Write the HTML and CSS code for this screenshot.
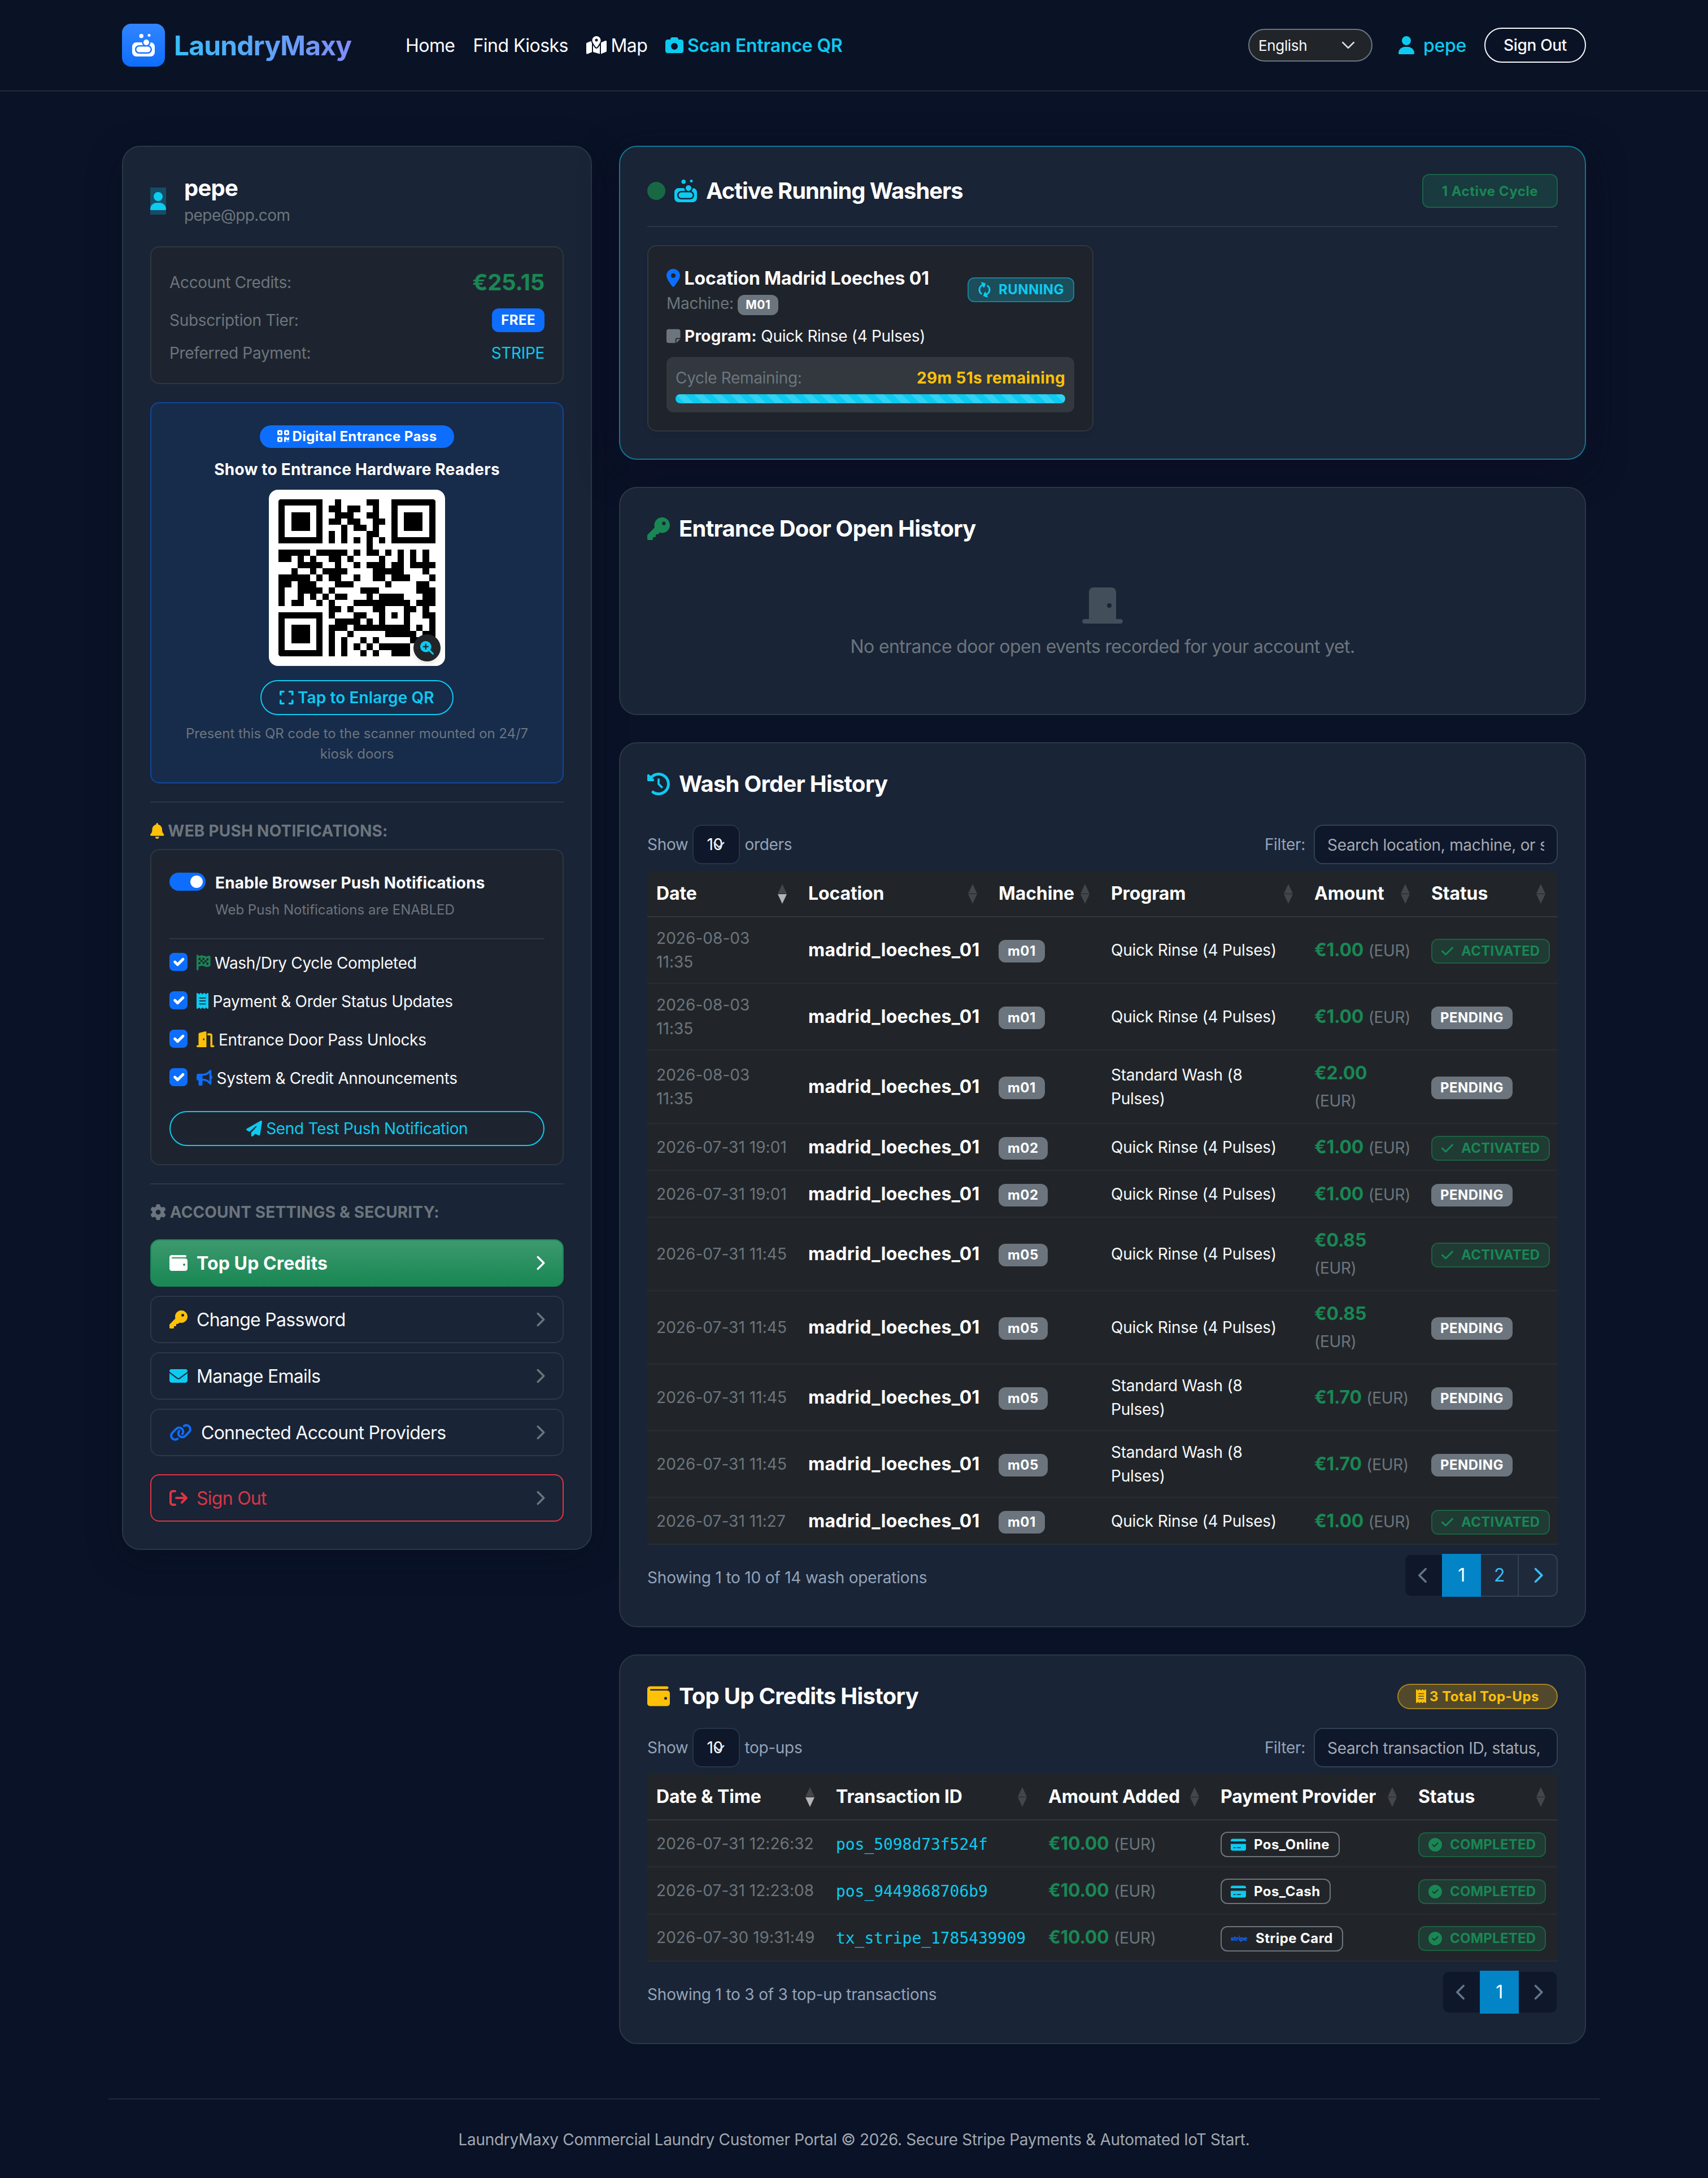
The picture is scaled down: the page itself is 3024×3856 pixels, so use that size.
FILE: index.html
```html
<!DOCTYPE html>
<html lang="en">
<head>
    <meta charset="UTF-8">
    <meta name="viewport" content="width=device-width, initial-scale=1.0">
    <title>LaundryMaxy - My Account</title>
    <link rel="stylesheet" href="styles.css">
</head>
<body>
    <!-- Icon shapes -->
    <svg class="sprite" aria-hidden="true">
        <defs>
            <path id="i-user" d="M224 256A128 128 0 1 0 224 0a128 128 0 1 0 0 256zm-45.7 48C79.8 304 0 383.8 0 482.3C0 498.7 13.3 512 29.7 512H418.3c16.4 0 29.7-13.3 29.7-29.7C448 383.8 368.2 304 269.7 304H178.3z"/>
            <path id="i-soap" d="M208 96A48 48 0 1 0 208 0a48 48 0 1 0 0 96zM320 256c35.3 0 64-28.7 64-64s-28.7-64-64-64s-64 28.7-64 64s28.7 64 64 64zM416 32a32 32 0 1 0 -64 0 32 32 0 1 0 64 0zm0 160c0 27.6-11.7 52.5-30.4 70.1C422.1 275.7 448 310.8 448 352c0 53-43 96-96 96l-192 0c-53 0-96-43-96-96s43-96 96-96l88.4 0c-15.2-17-24.4-39.4-24.4-64L96 192c-53 0-96 43-96 96L0 416c0 53 43 96 96 96l320 0c53 0 96-43 96-96l0-128c0-53-43-96-96-96zM160 288c-35.3 0-64 28.7-64 64s28.7 64 64 64l192 0c35.3 0 64-28.7 64-64s-28.7-64-64-64l-192 0z"/>
            <path id="i-map" d="M408 120c0 54.6-73.1 151.9-105.2 192c-7.7 9.6-22 9.6-29.6 0C241.1 271.9 168 174.6 168 120C168 53.7 221.7 0 288 0s120 53.7 120 120zm8 80.4c3.5-6.9 6.7-13.8 9.6-20.6c.5-1.2 1-2.5 1.5-3.7l116-46.4C558.9 123.4 576 135 576 152V422.8c0 9.8-6 18.6-15.1 22.3L416 503V200.4zM137.6 138.3c2.4 14.1 7.2 28.3 12.8 41.5c2.9 6.8 6.1 13.7 9.6 20.6V451.8L32.9 502.7C17.1 509 0 497.4 0 480.4V209.6c0-9.8 6-18.6 15.1-22.3l122.6-49zM327.8 332c13.9-17.4 35.7-45.7 56.2-77V504.3L192 449.4V255c20.5 31.3 42.3 59.6 56.2 77c20.5 25.6 59.1 25.6 79.6 0zM288 152a40 40 0 1 0 0-80 40 40 0 1 0 0 80z"/>
            <path id="i-camera" d="M149.1 64.8L138.7 96H64C28.7 96 0 124.7 0 160V416c0 35.3 28.7 64 64 64H448c35.3 0 64-28.7 64-64V160c0-35.3-28.7-64-64-64H373.3L362.9 64.8C356.4 45.2 338.1 32 317.4 32H194.6c-20.7 0-39 13.2-45.5 32.8zM256 192a96 96 0 1 1 0 192 96 96 0 1 1 0-192z"/>
            <path id="i-qrcode" d="M0 80C0 53.5 21.5 32 48 32h96c26.5 0 48 21.5 48 48v96c0 26.5-21.5 48-48 48H48c-26.5 0-48-21.5-48-48V80zM64 96v64h64V96H64zM0 336c0-26.5 21.5-48 48-48h96c26.5 0 48 21.5 48 48v96c0 26.5-21.5 48-48 48H48c-26.5 0-48-21.5-48-48V336zm64 16v64h64V352H64zM304 32h96c26.5 0 48 21.5 48 48v96c0 26.5-21.5 48-48 48H304c-26.5 0-48-21.5-48-48V80c0-26.5 21.5-48 48-48zm80 64H320v64h64V96zM256 304c0-8.8 7.2-16 16-16h64c8.8 0 16 7.2 16 16s7.2 16 16 16h32c8.8 0 16-7.2 16-16s7.2-16 16-16s16 7.2 16 16v96c0 8.8-7.2 16-16 16H368c-8.8 0-16-7.2-16-16s-7.2-16-16-16s-16 7.2-16 16v64c0 8.8-7.2 16-16 16H272c-8.8 0-16-7.2-16-16V304zM368 480a16 16 0 1 1 0-32 16 16 0 1 1 0 32zm64 0a16 16 0 1 1 0-32 16 16 0 1 1 0 32z"/>
            <path id="i-expand" d="M32 32C14.3 32 0 46.3 0 64v96c0 17.7 14.3 32 32 32s32-14.3 32-32V96h64c17.7 0 32-14.3 32-32s-14.3-32-32-32H32zM64 352c0-17.7-14.3-32-32-32s-32 14.3-32 32v96c0 17.7 14.3 32 32 32h96c17.7 0 32-14.3 32-32s-14.3-32-32-32H64V352zM320 32c-17.7 0-32 14.3-32 32s14.3 32 32 32h64v64c0 17.7 14.3 32 32 32s32-14.3 32-32V64c0-17.7-14.3-32-32-32H320zM448 352c0-17.7-14.3-32-32-32s-32 14.3-32 32v64H320c-17.7 0-32 14.3-32 32s14.3 32 32 32h96c17.7 0 32-14.3 32-32V352z"/>
            <path id="i-zoom" d="M416 208c0 45.9-14.9 88.3-40 122.7L502.6 457.4c12.5 12.5 12.5 32.8 0 45.3s-32.8 12.5-45.3 0L330.7 376c-34.4 25.2-76.8 40-122.7 40C93.1 416 0 322.9 0 208S93.1 0 208 0S416 93.1 416 208zM184 296c0 13.3 10.7 24 24 24s24-10.7 24-24V232h64c13.3 0 24-10.7 24-24s-10.7-24-24-24H232V120c0-13.3-10.7-24-24-24s-24 10.7-24 24v64H120c-13.3 0-24 10.7-24 24s10.7 24 24 24h64v64z"/>
            <path id="i-bell" d="M224 0c-17.7 0-32 14.3-32 32V51.2C119 66 64 130.6 64 208v18.8c0 47-17.3 92.4-48.5 127.6l-7.4 8.3c-8.4 9.4-10.4 22.9-5.3 34.4S19.4 416 32 416H416c12.6 0 24-7.4 29.2-18.9s3.1-25-5.3-34.4l-7.4-8.3C401.3 319.2 384 273.9 384 226.8V208c0-77.4-55-142-128-156.8V32c0-17.7-14.3-32-32-32zm45.3 493.3c12-12 18.7-28.3 18.7-45.3H224 160c0 17 6.7 33.3 18.7 45.3s28.3 18.7 45.3 18.7s33.3-6.7 45.3-18.7z"/>
            <path id="i-flag" d="M32 0C49.7 0 64 14.3 64 32V48l69-17.2c38.1-9.5 78.3-5.1 113.5 12.5c46.3 23.2 100.8 23.2 147.1 0l9.6-4.8C423.8 28.1 448 43.1 448 66.1V345.8c0 13.3-8.3 25.3-20.8 30l-34.7 13c-46.2 17.3-97.6 14.6-141.7-7.4c-37.9-19-81.3-23.7-122.5-13.4L64 384v96c0 17.7-14.3 32-32 32s-32-14.3-32-32V400 334 64 32C0 14.3 14.3 0 32 0zM64 187.1l64-13.9v65.5L64 252.6V318l48.8-12.2c5.1-1.3 10.1-2.4 15.2-3.3V238.7l38.9-8.4c8.3-1.8 16.7-2.5 25.1-2.1l0-64c13.6 .4 27.2 2.6 40.4 6.4l23.6 6.9v66.7l-41.7-12.3c-7.3-2.1-14.8-3.4-22.3-3.8v71.4c21.8 1.9 43.3 6.7 64 14.4V244.2l22.7 6.7c13.5 4 27.3 6.4 41.3 7.4V194c-7.8-.8-15.6-2.3-23.2-4.5l-40.8-12v-62c-13-3.8-25.8-8.8-38.2-15c-8.2-4.1-16.9-7-25.8-8.8v72.4c-13-.4-26 .8-38.7 3.6L128 173.2V98L64 114v73.1zM320 335.7c16.8 1.5 33.9-.7 50-6.8l14-5.2V251.9l-7.9 1.8c-18.4 4.3-37.3 5.7-56.1 4.5v77.4zm64-149.4V115.4c-20.9 6.1-42.4 9.1-64 9.1V194c13.9 1.4 28 .5 41.7-2.6l22.3-5.2z"/>
            <path id="i-receipt" d="M14 2.2C22.5-1.7 32.5-.3 39.6 5.8L80 40.4 120.4 5.8c9-7.7 22.3-7.7 31.2 0L192 40.4 232.4 5.8c9-7.7 22.3-7.7 31.2 0L304 40.4 344.4 5.8c7.1-6.1 17.1-7.5 25.6-3.6s14 12.4 14 21.8V488c0 9.4-5.5 17.9-14 21.8s-18.5 2.5-25.6-3.6L304 471.6l-40.4 34.6c-9 7.7-22.3 7.7-31.2 0L192 471.6l-40.4 34.6c-9 7.7-22.3 7.7-31.2 0L80 471.6 39.6 506.2c-7.1 6.1-17.1 7.5-25.6 3.6S0 497.4 0 488V24C0 14.6 5.5 6.1 14 2.2zM96 144c-8.8 0-16 7.2-16 16s7.2 16 16 16H288c8.8 0 16-7.2 16-16s-7.2-16-16-16H96zM80 352c0 8.8 7.2 16 16 16H288c8.8 0 16-7.2 16-16s-7.2-16-16-16H96c-8.8 0-16 7.2-16 16zM96 240c-8.8 0-16 7.2-16 16s7.2 16 16 16H288c8.8 0 16-7.2 16-16s-7.2-16-16-16H96z"/>
            <path id="i-door-open" d="M320 32c0-9.9-4.5-19.2-12.3-25.2S289.8-1.4 280.2 1l-179.9 45C79 51.3 64 70.5 64 92.5V448H32c-17.7 0-32 14.3-32 32s14.3 32 32 32H96 288h32V480 32zM256 256c0 17.7-10.7 32-24 32s-24-14.3-24-32s10.7-32 24-32s24 14.3 24 32zm96-128h96V480c0 17.7 14.3 32 32 32h64c17.7 0 32-14.3 32-32s-14.3-32-32-32H512V128c0-35.3-28.7-64-64-64H352v64z"/>
            <path id="i-door-closed" d="M96 64c0-35.3 28.7-64 64-64H416c35.3 0 64 28.7 64 64V448h64c17.7 0 32 14.3 32 32s-14.3 32-32 32H432 144 32c-17.7 0-32-14.3-32-32s14.3-32 32-32H96V64zM384 288a32 32 0 1 0 0-64 32 32 0 1 0 0 64z"/>
            <path id="i-bullhorn" d="M480 32c0-12.9-7.8-24.6-19.8-29.6s-25.7-2.2-34.9 6.9L381.7 53c-48 48-113.1 75-181 75H192 160 64c-35.3 0-64 28.7-64 64v96c0 35.3 28.7 64 64 64l0 128c0 17.7 14.3 32 32 32h64c17.7 0 32-14.3 32-32V352l8.7 0c67.9 0 133 27 181 75l43.6 43.6c9.2 9.2 22.9 11.9 34.9 6.9s19.8-16.6 19.8-29.6V300.4c18.6-8.8 32-32.5 32-60.4s-13.4-51.6-32-60.4V32zm-64 76.7V240 371.3C357.2 317.8 280.5 288 200.7 288H192V192h8.7c79.8 0 156.5-29.8 215.3-83.3z"/>
            <path id="i-plane" d="M498.1 5.6c10.1 7 15.4 19.1 13.5 31.2l-64 416c-1.5 9.7-7.4 18.2-16 23s-18.9 5.4-28 1.6L284 427.7l-68.5 74.1c-8.9 9.7-22.9 12.9-35.2 8.1S160 493.2 160 480V396.4c0-4 1.5-7.8 4.2-10.7L331.8 202.8c5.8-6.3 5.6-16-.4-22s-15.7-6.4-22-.7L106 360.8 17.7 316.6C7.1 311.3 .3 300.7 0 288.9s5.9-22.8 16.1-28.7l448-256c10.7-6.1 23.9-5.5 34 1.4z"/>
            <path id="i-gear" d="M495.9 166.6c3.2 8.7 .5 18.4-6.4 24.6l-43.3 39.4c1.1 8.3 1.7 16.8 1.7 25.4s-.6 17.1-1.7 25.4l43.3 39.4c6.9 6.2 9.6 15.9 6.4 24.6c-4.4 11.9-9.7 23.3-15.8 34.3l-4.7 8.1c-6.6 11-14 21.4-22.1 31.2c-5.9 7.2-15.7 9.6-24.5 6.8l-55.7-17.7c-13.4 10.3-28.2 18.9-44 25.4l-12.5 57.1c-2 9.1-9 16.3-18.2 17.8c-13.8 2.3-28 3.5-42.5 3.5s-28.7-1.2-42.5-3.5c-9.2-1.5-16.2-8.7-18.2-17.8l-12.5-57.1c-15.8-6.5-30.6-15.1-44-25.4L83.1 425.9c-8.8 2.8-18.6 .3-24.5-6.8c-8.1-9.8-15.5-20.2-22.1-31.2l-4.7-8.1c-6.1-11-11.4-22.4-15.8-34.3c-3.2-8.7-.5-18.4 6.4-24.6l43.3-39.4C64.6 273.1 64 264.6 64 256s.6-17.1 1.7-25.4L22.4 191.2c-6.9-6.2-9.6-15.9-6.4-24.6c4.4-11.9 9.7-23.3 15.8-34.3l4.7-8.1c6.6-11 14-21.4 22.1-31.2c5.9-7.2 15.7-9.6 24.5-6.8l55.7 17.7c13.4-10.3 28.2-18.9 44-25.4l12.5-57.1c2-9.1 9-16.3 18.2-17.8C227.3 1.2 241.5 0 256 0s28.7 1.2 42.5 3.5c9.2 1.5 16.2 8.7 18.2 17.8l12.5 57.1c15.8 6.5 30.6 15.1 44 25.4l55.7-17.7c8.8-2.8 18.6-.3 24.5 6.8c8.1 9.8 15.5 20.2 22.1 31.2l4.7 8.1c6.1 11 11.4 22.4 15.8 34.3zM256 336a80 80 0 1 0 0-160 80 80 0 1 0 0 160z"/>
            <path id="i-wallet" d="M64 32C28.7 32 0 60.7 0 96V416c0 35.3 28.7 64 64 64H448c35.3 0 64-28.7 64-64V192c0-35.3-28.7-64-64-64H80c-8.8 0-16-7.2-16-16s7.2-16 16-16H448c17.7 0 32-14.3 32-32s-14.3-32-32-32H64zM416 272a32 32 0 1 1 0 64 32 32 0 1 1 0-64z"/>
            <path id="i-key" d="M336 352c97.2 0 176-78.8 176-176S433.2 0 336 0S160 78.8 160 176c0 18.7 2.9 36.8 8.3 53.7L7 391c-4.5 4.5-7 10.6-7 17v80c0 13.3 10.7 24 24 24h80c13.3 0 24-10.7 24-24V448h40c13.3 0 24-10.7 24-24V384h40c6.4 0 12.5-2.5 17-7l33.3-33.3c16.9 5.4 35 8.3 53.7 8.3zM376 96a40 40 0 1 1 0 80 40 40 0 1 1 0-80z"/>
            <path id="i-envelope" d="M48 64C21.5 64 0 85.5 0 112c0 15.1 7.1 29.3 19.2 38.4L236.8 313.6c11.4 8.5 27 8.5 38.4 0L492.8 150.4c12.1-9.1 19.2-23.3 19.2-38.4c0-26.5-21.5-48-48-48H48zM0 176V384c0 35.3 28.7 64 64 64H448c35.3 0 64-28.7 64-64V176L294.4 339.2c-22.8 17.1-54 17.1-76.8 0L0 176z"/>
            <path id="i-link" d="M579.8 267.7c56.5-56.5 56.5-148 0-204.5c-50-50-128.8-56.5-186.3-15.4l-1.6 1.1c-14.4 10.3-17.7 30.3-7.4 44.6s30.3 17.7 44.6 7.4l1.6-1.1c32.1-22.9 76-19.3 103.8 8.6c31.5 31.5 31.5 82.5 0 114L422.3 334.8c-31.5 31.5-82.5 31.5-114 0c-27.9-27.9-31.5-71.8-8.6-103.8l1.1-1.6c10.3-14.4 6.9-34.4-7.4-44.6s-34.4-6.9-44.6 7.4l-1.1 1.6C206.5 251.2 213 330 263 380c56.5 56.5 148 56.5 204.5 0L579.8 267.7zM60.2 244.3c-56.5 56.5-56.5 148 0 204.5c50 50 128.8 56.5 186.3 15.4l1.6-1.1c14.4-10.3 17.7-30.3 7.4-44.6s-30.3-17.7-44.6-7.4l-1.6 1.1c-32.1 22.9-76 19.3-103.8-8.6C74 372 74 321 105.5 289.5L217.7 177.2c31.5-31.5 82.5-31.5 114 0c27.9 27.9 31.5 71.8 8.6 103.9l-1.1 1.6c-10.3 14.4-6.9 34.4 7.4 44.6s34.4 6.9 44.6-7.4l1.1-1.6C433.5 260.8 427 182 377 132c-56.5-56.5-148-56.5-204.5 0L60.2 244.3z"/>
            <path id="i-logout" d="M502.6 278.6c12.5-12.5 12.5-32.8 0-45.3l-128-128c-12.5-12.5-32.8-12.5-45.3 0s-12.5 32.8 0 45.3L402.7 224 192 224c-17.7 0-32 14.3-32 32s14.3 32 32 32l210.7 0-73.4 73.4c-12.5 12.5-12.5 32.8 0 45.3s32.8 12.5 45.3 0l128-128zM160 96c17.7 0 32-14.3 32-32s-14.3-32-32-32L96 32C43 32 0 75 0 128L0 384c0 53 43 96 96 96l64 0c17.7 0 32-14.3 32-32s-14.3-32-32-32l-64 0c-17.7 0-32-14.3-32-32l0-256c0-17.7 14.3-32 32-32l64 0z"/>
            <path id="i-pin" d="M215.7 499.2C267 435 384 279.4 384 192C384 86 298 0 192 0S0 86 0 192c0 87.4 117 243 168.3 307.2c12.3 15.3 35.1 15.3 47.4 0zM192 128a64 64 0 1 1 0 128 64 64 0 1 1 0-128z"/>
            <path id="i-note" d="M64 32C28.7 32 0 60.7 0 96V416c0 35.3 28.7 64 64 64H288V368c0-26.5 21.5-48 48-48H448V96c0-35.3-28.7-64-64-64H64zM448 352H402.7 336c-8.8 0-16 7.2-16 16v66.7V480l32-32 64-64 32-32z"/>
            <path id="i-rotate" d="M142.9 142.9c62.2-62.2 162.7-62.5 225.3-1L327 183c-6.9 6.9-8.9 17.2-5.2 26.2s12.5 14.8 22.2 14.8H463.5H472c13.3 0 24-10.7 24-24V72c0-9.7-5.8-18.5-14.8-22.2s-19.3-1.7-26.2 5.2L413.4 96.6c-87.6-86.5-228.7-86.2-315.8 1C73.2 122 55.6 150.7 44.8 181.4c-5.9 16.7 2.9 34.9 19.5 40.8s34.9-2.9 40.8-19.5c7.7-21.8 20.2-42.3 37.8-59.8zM16 312v7.6 .7V440c0 9.7 5.8 18.5 14.8 22.2s19.3 1.7 26.2-5.2l41.6-41.6c87.6 86.5 228.7 86.2 315.8-1c24.4-24.4 42.1-53.1 52.9-83.7c5.9-16.7-2.9-34.9-19.5-40.8s-34.9 2.9-40.8 19.5c-7.7 21.8-20.2 42.3-37.8 59.8c-62.2 62.2-162.7 62.5-225.3 1L185 329c6.9-6.9 8.9-17.2 5.2-26.2s-12.5-14.8-22.2-14.8H48.4h-.7H40c-13.3 0-24 10.7-24 24z"/>
            <path id="i-history" d="M75 75L41 41C25.9 25.9 0 36.6 0 57.9V168c0 13.3 10.7 24 24 24H134.1c21.4 0 32.1-25.9 17-41l-30.8-30.8C155 85.5 203 64 256 64c106 0 192 86 192 192s-86 192-192 192c-40.8 0-78.6-12.7-109.7-34.4c-14.5-10.1-34.4-6.6-44.6 7.9s-6.6 34.4 7.9 44.6C151.2 495 201.7 512 256 512c141.4 0 256-114.6 256-256S397.4 0 256 0C185.3 0 121.3 28.7 75 75zm181 53c-13.3 0-24 10.7-24 24V256c0 6.4 2.5 12.5 7 17l72 72c9.4 9.4 24.6 9.4 33.9 0s9.4-24.6 0-33.9l-65-65V152c0-13.3-10.7-24-24-24z"/>
            <path id="i-check" d="M438.6 105.4c12.5 12.5 12.5 32.8 0 45.3l-256 256c-12.5 12.5-32.8 12.5-45.3 0l-128-128c-12.5-12.5-12.5-32.8 0-45.3s32.8-12.5 45.3 0L160 338.7 393.4 105.4c12.5-12.5 32.8-12.5 45.3 0z"/>
            <path id="i-done" d="M256 512A256 256 0 1 0 256 0a256 256 0 1 0 0 512zM369 209L241 337c-9.4 9.4-24.6 9.4-33.9 0l-64-64c-9.4-9.4-9.4-24.6 0-33.9s24.6-9.4 33.9 0l47 47L335 175c9.4-9.4 24.6-9.4 33.9 0s9.4 24.6 0 33.9z"/>
            <path id="i-card" d="M64 32C28.7 32 0 60.7 0 96v32H576V96c0-35.3-28.7-64-64-64H64zM576 224H0V416c0 35.3 28.7 64 64 64H512c35.3 0 64-28.7 64-64V224zM112 352h64c8.8 0 16 7.2 16 16s-7.2 16-16 16H112c-8.8 0-16-7.2-16-16s7.2-16 16-16zm112 16c0-8.8 7.2-16 16-16H368c8.8 0 16 7.2 16 16s-7.2 16-16 16H240c-8.8 0-16-7.2-16-16z"/>
            <path id="i-right" d="M310.6 233.4c12.5 12.5 12.5 32.8 0 45.3l-192 192c-12.5 12.5-32.8 12.5-45.3 0s-12.5-32.8 0-45.3L242.7 256 73.4 86.6c-12.5-12.5-12.5-32.8 0-45.3s32.8-12.5 45.3 0l192 192z"/>
            <path id="i-left" d="M9.4 233.4c-12.5 12.5-12.5 32.8 0 45.3l192 192c12.5 12.5 32.8 12.5 45.3 0s12.5-32.8 0-45.3L77.3 256 246.6 86.6c12.5-12.5 12.5-32.8 0-45.3s-32.8-12.5-45.3 0l-192 192z"/>
        </defs>
    </svg>

    <nav class="navbar">
        <div class="container nav-inner">
            <a class="brand">
                <span class="brand-icon"><svg class="icon" viewBox="0 0 512 512"><use href="#i-soap"/></svg></span>
                <span class="brand-name">LaundryMaxy</span>
            </a>
            <div class="nav-links">
                <a>Home</a>
                <a>Find Kiosks</a>
                <a><svg class="icon" viewBox="0 0 576 512"><use href="#i-map"/></svg> Map</a>
                <a class="nav-scan"><svg class="icon" viewBox="0 0 512 512"><use href="#i-camera"/></svg> Scan Entrance QR</a>
            </div>
            <div class="nav-user">
                <div class="lang-select">English <svg class="caret" viewBox="0 0 16 16"><path d="m2 5 6 6 6-6"/></svg></div>
                <a class="user-link"><svg class="icon" viewBox="0 0 448 512"><use href="#i-user"/></svg> pepe</a>
                <button class="btn btn-light">Sign Out</button>
            </div>
        </div>
    </nav>

    <main class="container layout">
        <!-- Sidebar -->
        <aside class="card sidebar">
            <div class="profile">
                <span class="avatar"><svg class="icon" viewBox="0 0 448 512"><use href="#i-user"/></svg></span>
                <div>
                    <h5>pepe</h5>
                    <div class="email">pepe@pp.com</div>
                </div>
            </div>

            <div class="box account">
                <div class="account-row"><span>Account Credits:</span><strong class="credits">€25.15</strong></div>
                <div class="account-row"><span>Subscription Tier:</span><span class="tier">FREE</span></div>
                <div class="account-row"><span>Preferred Payment:</span><span class="cyan">STRIPE</span></div>
            </div>

            <div class="pass">
                <span class="pass-pill"><svg class="icon" viewBox="0 0 448 512"><use href="#i-qrcode"/></svg> Digital Entrance Pass</span>
                <h6>Show to Entrance Hardware Readers</h6>
                <div class="qr">
                    <svg class="qr-code" viewBox="-0.12 -0.12 25.24 25.24" shape-rendering="crispEdges">
                        <path stroke="#000" stroke-width="1" d="M0 .5h7m2 0h1m4 0h2m2 0h7M0 1.5h1m5 0h1m1 0h2m1 0h2m2 0h1m2 0h1m5 0h1M0 2.5h1m1 0h3m1 0h1m2 0h3m2 0h2m2 0h1m1 0h3m1 0h1M0 3.5h1m1 0h3m1 0h1m1 0h2m1 0h2m2 0h2m1 0h1m1 0h3m1 0h1M0 4.5h1m1 0h3m1 0h1m3 0h1m1 0h2m1 0h1m2 0h1m1 0h3m1 0h1M0 5.5h1m5 0h1m1 0h1m1 0h1m3 0h2m2 0h1m5 0h1M0 6.5h7m1 0h1m1 0h1m1 0h1m1 0h1m1 0h1m1 0h7M14 7.5h1M0 8.5h5m1 0h5m1 0h1m1 0h2m1 0h1m1 0h1m1 0h1m1 0h1M0 9.5h2m1 0h1m1 0h1m2 0h2m1 0h1m4 0h1m2 0h1m1 0h1m1 0h1M3 10.5h4m2 0h1m2 0h1m1 0h3m1 0h2m1 0h4M2 11.5h1m2 0h1m1 0h4m4 0h5m3 0h1M0 12.5h5m1 0h1m1 0h2m2 0h1m2 0h2m1 0h3m3 0h1M0 13.5h2m1 0h3m3 0h3m5 0h1m4 0h2M0 14.5h1m2 0h4m1 0h1m4 0h3m6 0h3M0 15.5h1m2 0h1m1 0h1m1 0h1m1 0h2m3 0h1m1 0h4m3 0h2M0 16.5h1m1 0h2m2 0h1m1 0h1m3 0h9m1 0h3M8 17.5h2m1 0h1m3 0h2m3 0h2m1 0h1M0 18.5h7m1 0h1m3 0h2m2 0h1m1 0h1m1 0h1m2 0h2M0 19.5h1m5 0h1m2 0h4m1 0h1m1 0h1m3 0h1m3 0h1M0 20.5h1m1 0h3m1 0h1m1 0h3m1 0h9m1 0h1m1 0h1M0 21.5h1m1 0h3m1 0h1m1 0h1m2 0h1m5 0h5m1 0h2M0 22.5h1m1 0h3m1 0h1m1 0h1m1 0h1m2 0h1m1 0h1m5 0h2M0 23.5h1m5 0h1m1 0h1m1 0h1m1 0h1m1 0h1m1 0h5M0 24.5h7m1 0h1m1 0h1m2 0h1m1 0h1m2 0h3"/>
                    </svg>
                    <span class="qr-zoom"><svg class="icon" viewBox="0 0 512 512"><use href="#i-zoom"/></svg></span>
                </div>
                <button class="btn btn-info strong"><svg class="icon" viewBox="0 0 448 512"><use href="#i-expand"/></svg> Tap to Enlarge QR</button>
                <p>Present this QR code to the scanner mounted on 24/7 kiosk doors</p>
            </div>

            <hr>

            <h6 class="section-label"><svg class="icon yellow" viewBox="0 0 448 512"><use href="#i-bell"/></svg> Web Push Notifications:</h6>
            <div class="box push">
                <div class="push-main">
                    <span class="switch"></span>
                    <div>
                        <div class="push-title">Enable Browser Push Notifications</div>
                        <div class="push-sub">Web Push Notifications are ENABLED</div>
                    </div>
                </div>
                <div class="push-list">
                    <label><span class="check"><svg viewBox="0 0 20 20"><path d="m6 10 3 3 6-6"/></svg></span><span class="push-name"><svg class="icon green" viewBox="0 0 448 512"><use href="#i-flag"/></svg> Wash/Dry Cycle Completed</span></label>
                    <label><span class="check"><svg viewBox="0 0 20 20"><path d="m6 10 3 3 6-6"/></svg></span><span class="push-name"><svg class="icon cyan" viewBox="0 0 384 512"><use href="#i-receipt"/></svg> Payment &amp; Order Status Updates</span></label>
                    <label><span class="check"><svg viewBox="0 0 20 20"><path d="m6 10 3 3 6-6"/></svg></span><span class="push-name"><svg class="icon yellow" viewBox="0 0 576 512"><use href="#i-door-open"/></svg> Entrance Door Pass Unlocks</span></label>
                    <label><span class="check"><svg viewBox="0 0 20 20"><path d="m6 10 3 3 6-6"/></svg></span><span class="push-name"><svg class="icon blue" viewBox="0 0 512 512"><use href="#i-bullhorn"/></svg> System &amp; Credit Announcements</span></label>
                </div>
                <button class="btn btn-info wide"><svg class="icon" viewBox="0 0 512 512"><use href="#i-plane"/></svg> Send Test Push Notification</button>
            </div>

            <hr>

            <h6 class="section-label settings-label"><svg class="icon" viewBox="0 0 512 512"><use href="#i-gear"/></svg> Account Settings &amp; Security:</h6>
            <div class="menu">
                <a class="menu-item topup"><svg class="icon" viewBox="0 0 512 512"><use href="#i-wallet"/></svg><span>Top Up Credits</span><svg class="icon arrow" viewBox="0 0 320 512"><use href="#i-right"/></svg></a>
                <a class="menu-item"><svg class="icon yellow" viewBox="0 0 512 512"><use href="#i-key"/></svg><span>Change Password</span><svg class="icon arrow" viewBox="0 0 320 512"><use href="#i-right"/></svg></a>
                <a class="menu-item"><svg class="icon cyan" viewBox="0 0 512 512"><use href="#i-envelope"/></svg><span>Manage Emails</span><svg class="icon arrow" viewBox="0 0 320 512"><use href="#i-right"/></svg></a>
                <a class="menu-item"><svg class="icon blue" viewBox="0 0 640 512"><use href="#i-link"/></svg><span>Connected Account Providers</span><svg class="icon arrow" viewBox="0 0 320 512"><use href="#i-right"/></svg></a>
                <a class="menu-item danger"><svg class="icon" viewBox="0 0 512 512"><use href="#i-logout"/></svg><span>Sign Out</span><svg class="icon arrow" viewBox="0 0 320 512"><use href="#i-right"/></svg></a>
            </div>
        </aside>

        <div class="content">
            <!-- Active washers -->
            <section class="card card-active">
                <div class="card-head active-head">
                    <h5><span class="pulse"></span><svg class="icon cyan" viewBox="0 0 512 512"><use href="#i-soap"/></svg>Active Running Washers</h5>
                    <span class="cycle-badge">1 Active Cycle</span>
                </div>
                <div class="washer">
                    <div class="washer-top">
                        <div>
                            <h6><svg class="icon blue" viewBox="0 0 384 512"><use href="#i-pin"/></svg> Location Madrid Loeches 01</h6>
                            <div class="machine-line">Machine: <span class="tag">M01</span></div>
                        </div>
                        <span class="badge running"><svg class="icon spin" viewBox="0 0 512 512"><use href="#i-rotate"/></svg>RUNNING</span>
                    </div>
                    <div class="program-line"><svg class="icon muted" viewBox="0 0 448 512"><use href="#i-note"/></svg> <strong>Program:</strong> Quick Rinse (4 Pulses)</div>
                    <div class="cycle">
                        <div class="cycle-row"><span>Cycle Remaining:</span><strong>29m 51s remaining</strong></div>
                        <div class="progress"><div class="progress-bar" style="width: 100%"></div></div>
                    </div>
                </div>
            </section>

            <!-- Door history -->
            <section class="card">
                <div class="card-head"><h5><svg class="icon green" viewBox="0 0 512 512"><use href="#i-key"/></svg>Entrance Door Open History</h5></div>
                <div class="empty">
                    <svg class="icon" viewBox="0 0 576 512"><use href="#i-door-closed"/></svg>
                    <p>No entrance door open events recorded for your account yet.</p>
                </div>
            </section>

            <!-- Wash orders -->
            <section class="card">
                <div class="card-head wash-head"><h5><svg class="icon cyan" viewBox="0 0 512 512"><use href="#i-history"/></svg>Wash Order History</h5></div>
                <div class="controls">
                    <div class="control">Show <span class="length">10<svg viewBox="0 0 16 16"><path d="m2 5 6 6 6-6"/></svg></span> orders</div>
                    <div class="control">Filter: <input type="text" placeholder="Search location, machine, or status..."></div>
                </div>
                <table class="wash-table">
                    <colgroup><col class="w1"><col class="w2"><col class="w3"><col class="w4"><col class="w5"><col class="w6"></colgroup>
                    <thead>
                        <tr><th class="desc">Date</th><th>Location</th><th>Machine</th><th>Program</th><th>Amount</th><th>Status</th></tr>
                    </thead>
                    <tbody>
                        <tr class="two"><td class="date">2026-08-03<br>11:35</td><td class="loc">madrid_loeches_01</td><td><span class="badge grey">m01</span></td><td class="prog">Quick Rinse (4 Pulses)</td><td><b class="amount">€1.00</b> <small>(EUR)</small></td><td><span class="badge ok"><svg class="icon" viewBox="0 0 448 512"><use href="#i-check"/></svg>ACTIVATED</span></td></tr>
                        <tr class="two"><td class="date">2026-08-03<br>11:35</td><td class="loc">madrid_loeches_01</td><td><span class="badge grey">m01</span></td><td class="prog">Quick Rinse (4 Pulses)</td><td><b class="amount">€1.00</b> <small>(EUR)</small></td><td><span class="badge grey">PENDING</span></td></tr>
                        <tr class="tall"><td class="date">2026-08-03<br>11:35</td><td class="loc">madrid_loeches_01</td><td><span class="badge grey">m01</span></td><td class="prog">Standard Wash (8 Pulses)</td><td><b class="amount">€2.00</b><br><small>(EUR)</small></td><td><span class="badge grey">PENDING</span></td></tr>
                        <tr><td class="date">2026-07-31 19:01</td><td class="loc">madrid_loeches_01</td><td><span class="badge grey">m02</span></td><td class="prog">Quick Rinse (4 Pulses)</td><td><b class="amount">€1.00</b> <small>(EUR)</small></td><td><span class="badge ok"><svg class="icon" viewBox="0 0 448 512"><use href="#i-check"/></svg>ACTIVATED</span></td></tr>
                        <tr><td class="date">2026-07-31 19:01</td><td class="loc">madrid_loeches_01</td><td><span class="badge grey">m02</span></td><td class="prog">Quick Rinse (4 Pulses)</td><td><b class="amount">€1.00</b> <small>(EUR)</small></td><td><span class="badge grey">PENDING</span></td></tr>
                        <tr class="tall"><td class="date">2026-07-31 11:45</td><td class="loc">madrid_loeches_01</td><td><span class="badge grey">m05</span></td><td class="prog">Quick Rinse (4 Pulses)</td><td><b class="amount">€0.85</b><br><small>(EUR)</small></td><td><span class="badge ok"><svg class="icon" viewBox="0 0 448 512"><use href="#i-check"/></svg>ACTIVATED</span></td></tr>
                        <tr class="tall"><td class="date">2026-07-31 11:45</td><td class="loc">madrid_loeches_01</td><td><span class="badge grey">m05</span></td><td class="prog">Quick Rinse (4 Pulses)</td><td><b class="amount">€0.85</b><br><small>(EUR)</small></td><td><span class="badge grey">PENDING</span></td></tr>
                        <tr class="two"><td class="date">2026-07-31 11:45</td><td class="loc">madrid_loeches_01</td><td><span class="badge grey">m05</span></td><td class="prog">Standard Wash (8 Pulses)</td><td><b class="amount">€1.70</b> <small>(EUR)</small></td><td><span class="badge grey">PENDING</span></td></tr>
                        <tr class="two"><td class="date">2026-07-31 11:45</td><td class="loc">madrid_loeches_01</td><td><span class="badge grey">m05</span></td><td class="prog">Standard Wash (8 Pulses)</td><td><b class="amount">€1.70</b> <small>(EUR)</small></td><td><span class="badge grey">PENDING</span></td></tr>
                        <tr><td class="date">2026-07-31 11:27</td><td class="loc">madrid_loeches_01</td><td><span class="badge grey">m01</span></td><td class="prog">Quick Rinse (4 Pulses)</td><td><b class="amount">€1.00</b> <small>(EUR)</small></td><td><span class="badge ok"><svg class="icon" viewBox="0 0 448 512"><use href="#i-check"/></svg>ACTIVATED</span></td></tr>
                    </tbody>
                </table>
                <div class="table-foot">
                    <div class="info">Showing 1 to 10 of 14 wash operations</div>
                    <div class="pagination">
                        <a class="page off"><svg class="icon" viewBox="0 0 320 512"><use href="#i-left"/></svg></a>
                        <a class="page current">1</a>
                        <a class="page">2</a>
                        <a class="page"><svg class="icon" viewBox="0 0 320 512"><use href="#i-right"/></svg></a>
                    </div>
                </div>
            </section>

            <!-- Top ups -->
            <section class="card">
                <div class="card-head topup-head">
                    <h5><svg class="icon yellow" viewBox="0 0 512 512"><use href="#i-wallet"/></svg>Top Up Credits History</h5>
                    <span class="total-badge"><svg class="icon" viewBox="0 0 384 512"><use href="#i-receipt"/></svg> 3 Total Top-Ups</span>
                </div>
                <div class="controls">
                    <div class="control">Show <span class="length">10<svg viewBox="0 0 16 16"><path d="m2 5 6 6 6-6"/></svg></span> top-ups</div>
                    <div class="control">Filter: <input type="text" placeholder="Search transaction ID, status, provider..."></div>
                </div>
                <table class="topup-table">
                    <colgroup><col class="t1"><col class="t2"><col class="t3"><col class="t4"><col class="t5"></colgroup>
                    <thead>
                        <tr><th class="desc">Date &amp; Time</th><th>Transaction ID</th><th>Amount Added</th><th>Payment Provider</th><th>Status</th></tr>
                    </thead>
                    <tbody>
                        <tr><td class="date">2026-07-31 12:26:32</td><td><code>pos_5098d73f524f</code></td><td><b class="amount">€10.00</b> <small>(EUR)</small></td><td><span class="badge provider"><svg class="icon cyan" viewBox="0 0 576 512"><use href="#i-card"/></svg>Pos_Online</span></td><td><span class="badge ok done"><svg class="icon" viewBox="0 0 512 512"><use href="#i-done"/></svg>COMPLETED</span></td></tr>
                        <tr><td class="date">2026-07-31 12:23:08</td><td><code>pos_9449868706b9</code></td><td><b class="amount">€10.00</b> <small>(EUR)</small></td><td><span class="badge provider"><svg class="icon cyan" viewBox="0 0 576 512"><use href="#i-card"/></svg>Pos_Cash</span></td><td><span class="badge ok done"><svg class="icon" viewBox="0 0 512 512"><use href="#i-done"/></svg>COMPLETED</span></td></tr>
                        <tr><td class="date">2026-07-30 19:31:49</td><td><code>tx_stripe_1785439909</code></td><td><b class="amount">€10.00</b> <small>(EUR)</small></td><td><span class="badge provider"><span class="stripe">stripe</span>Stripe Card</span></td><td><span class="badge ok done"><svg class="icon" viewBox="0 0 512 512"><use href="#i-done"/></svg>COMPLETED</span></td></tr>
                    </tbody>
                </table>
                <div class="table-foot">
                    <div class="info">Showing 1 to 3 of 3 top-up transactions</div>
                    <div class="pagination">
                        <a class="page off"><svg class="icon" viewBox="0 0 320 512"><use href="#i-left"/></svg></a>
                        <a class="page current">1</a>
                        <a class="page off"><svg class="icon" viewBox="0 0 320 512"><use href="#i-right"/></svg></a>
                    </div>
                </div>
            </section>
        </div>
    </main>

    <footer class="footer">LaundryMaxy Commercial Laundry Customer Portal © 2026. Secure Stripe Payments &amp; Automated IoT Start.</footer>
</body>
</html>
```
FILE: styles.css
```css
* {
    margin: 0;
    padding: 0;
    box-sizing: border-box;
}

body {
    min-height: 100vh;
    background: #091226;
    color: #f8f9fa;
    font-family: Inter, "Liberation Sans", sans-serif;
    font-size: 32px;
    line-height: 1.5;
    letter-spacing: -0.01em;
}

.sprite {
    display: none;
}

.icon {
    display: inline-block;
    height: 1em;
    width: auto;
    vertical-align: -0.125em;
    fill: currentColor;
    overflow: visible;
}

.cyan { color: #0dcaf0; }
.blue { color: #0d6efd; }
.green { color: #198754; }
.yellow { color: #ffc107; }
.muted { color: #6c757d; }

.container {
    width: 2640px;
    margin: 0 auto;
    padding: 0 24px;
}

/* Navbar */
.navbar {
    height: 162px;
    background: #0a1326;
    border-bottom: 2px solid #232b3c;
}

.nav-inner {
    display: flex;
    align-items: center;
    height: 160px;
}

.brand {
    display: flex;
    align-items: center;
    gap: 16px;
    width: 486px;
}

.brand-icon {
    display: flex;
    align-items: center;
    justify-content: center;
    width: 76px;
    height: 76px;
    border-radius: 16px;
    background: linear-gradient(#3185ff, #0d6efd);
    font-size: 40px;
    color: #fff;
}

.brand-name {
    padding-top: 2px;
    font-size: 48px;
    font-weight: 700;
    letter-spacing: -0.018em;
    background: linear-gradient(90deg, #38bdf8, #818cf8);
    -webkit-background-clip: text;
    background-clip: text;
    color: transparent;
}

.nav-links {
    display: flex;
    gap: 32px;
    padding: 2px 0 0 16px;
    flex: 1;
    color: #fff;
    letter-spacing: -0.017em;
}

.nav-links .icon {
    margin-right: -1px;
}

.nav-scan {
    color: #0dcaf0;
    font-weight: 600;
    letter-spacing: -0.006em;
}

.nav-user {
    display: flex;
    align-items: center;
}

.lang-select {
    display: flex;
    align-items: center;
    justify-content: space-between;
    width: 220px;
    height: 58px;
    padding: 0 28px 0 16px;
    border: 2px solid #6c757d;
    border-radius: 29px;
    background: #212529;
    font-size: 26px;
}

.caret {
    width: 26px;
    height: 26px;
    fill: none;
    stroke: #dee2e6;
    stroke-width: 1.7;
    stroke-linecap: round;
    stroke-linejoin: round;
}

.user-link {
    margin: 0 32px 0 46px;
    padding-top: 2px;
    color: #0dcaf0;
    font-weight: 500;
}

.user-link .icon {
    margin-right: 8px;
}

.btn {
    display: inline-block;
    height: 62px;
    padding: 0 32px;
    border: 2px solid;
    border-radius: 31px;
    background: transparent;
    font: inherit;
    font-size: 28px;
    letter-spacing: inherit;
    line-height: 59px;
}

.btn-light {
    width: 180px;
    padding: 0;
    color: #f8f9fa;
    font-weight: 500;
}

.btn-info { color: #0dcaf0; }

.strong {
    font-weight: 600;
    letter-spacing: 0.004em;
}

.wide {
    display: block;
    width: 100%;
}

/* Cards */
.layout {
    display: flex;
    align-items: flex-start;
    gap: 48px;
    padding-top: 96px;
}

.card {
    padding: 48px;
    border: 2px solid #2b3647;
    border-radius: 32px;
    background: #192436;
}

.sidebar {
    width: 832px;
    flex: none;
    box-shadow: 0 16px 64px rgba(13, 12, 36, 0.3);
}

.content {
    display: flex;
    flex-direction: column;
    gap: 48px;
    width: 1712px;
}

h5 {
    font-size: 40px;
    line-height: 48px;
    font-weight: 700;
    letter-spacing: -0.019em;
    color: #fff;
}

h6 {
    font-size: 28px;
    font-weight: 700;
    line-height: 42px;
    letter-spacing: 0.008em;
    color: #fff;
}

hr {
    border: 0;
    height: 2px;
    margin: 32px 0;
    background: #2c3748;
}

.box {
    padding: 32px;
    border: 2px solid #2f3640;
    border-radius: 16px;
    background: #1e242f;
}

.profile {
    display: flex;
    align-items: center;
    gap: 32px;
    margin-bottom: 32px;
}

.profile h5 {
    padding-top: 2px;
    line-height: 46px;
}

.avatar {
    display: flex;
    align-items: center;
    height: 48px;
    background: #154d65;
    color: #0dcaf0;
}

.email {
    padding-top: 3px;
    font-size: 28px;
    line-height: 45px;
    letter-spacing: -0.02em;
    color: #6c757d;
}

.account {
    display: flex;
    flex-direction: column;
    gap: 16px;
    margin-bottom: 32px;
    font-size: 28px;
    color: #6c757d;
}

.account-row {
    display: flex;
    align-items: center;
    justify-content: space-between;
}

.account-row span {
    line-height: 42px;
}

.credits {
    font-size: 40px;
    line-height: 60px;
    color: #198754;
}

.tier {
    height: 42px;
    padding: 0 16px;
    border-radius: 12px;
    background: #0d6efd;
    color: #fff;
    font-size: 24px;
    font-weight: 700;
    letter-spacing: 0.018em;
}

/* Entrance pass */
.pass {
    display: flex;
    flex-direction: column;
    align-items: center;
    padding: 39px 32px 32px;
    border: 2px solid #11479c;
    border-radius: 16px;
    background: #172b4a;
    text-align: center;
}

.pass-pill {
    height: 40px;
    padding: 0 31px;
    border-radius: 20px;
    background: #0d6efd;
    color: #fff;
    font-size: 24px;
    font-weight: 700;
    line-height: 40px;
    letter-spacing: 0.017em;
}

.pass h6 {
    margin: 17px 0 15px;
}

.qr {
    position: relative;
    width: 312px;
    height: 312px;
    margin-bottom: 25px;
    padding: 16px;
    border-radius: 16px;
    background: #fff;
}

.qr-code {
    display: block;
    width: 280px;
    height: 280px;
    border-radius: 8px;
}

.qr-zoom {
    position: absolute;
    right: 8px;
    bottom: 8px;
    display: flex;
    align-items: center;
    justify-content: center;
    width: 48px;
    height: 48px;
    border-radius: 50%;
    background: #212529;
    box-shadow: 0 4px 8px rgba(0, 0, 0, 0.1);
    color: #0dcaf0;
    font-size: 24px;
}

.pass p {
    margin-top: 15px;
    color: #6c757d;
    font-size: 24px;
    line-height: 36px;
    letter-spacing: -0.002em;
}

/* Push notifications */
.section-label {
    margin: -3px 0 11px;
    color: #6c757d;
    text-transform: uppercase;
}

.settings-label {
    margin: -4px 0 27px;
    letter-spacing: 0.005em;
}

.push-main {
    display: flex;
    gap: 17px;
    padding: 5px 0 32px;
    border-bottom: 2px solid #31373f;
}

.switch {
    width: 64px;
    height: 32px;
    margin-top: 3px;
    padding: 5px;
    border-radius: 16px;
    background: #0d6efd;
}

.switch::after {
    content: "";
    display: block;
    width: 22px;
    height: 22px;
    margin-left: auto;
    border-radius: 50%;
    background: #fff;
}

.push-title {
    color: #fff;
    font-size: 28px;
    font-weight: 700;
    line-height: 42px;
    letter-spacing: 0.007em;
}

.push-sub {
    margin-top: 9px;
    color: #6c757d;
    font-size: 24px;
    line-height: 36px;
    letter-spacing: 0;
}

.push-list {
    display: flex;
    flex-direction: column;
    gap: 20px;
    padding: 16px 0 36px;
}

.push-list label {
    display: flex;
    align-items: center;
    gap: 16px;
    height: 48px;
    font-size: 28px;
}

.push-name {
    padding-top: 3px;
}

.check {
    width: 32px;
    height: 32px;
    border-radius: 8px;
    background: #0d6efd;
}

.check svg {
    display: block;
    fill: none;
    stroke: #fff;
    stroke-width: 3;
    stroke-linecap: round;
    stroke-linejoin: round;
}

/* Account menu */
.menu {
    display: flex;
    flex-direction: column;
    gap: 16px;
    letter-spacing: -0.023em;
}

.menu-item {
    display: flex;
    align-items: center;
    gap: 16px;
    height: 84px;
    padding: 0 32px;
    border: 2px solid #2c3748;
    border-radius: 16px;
}

.menu-item span {
    padding-top: 2px;
}

.menu-item .arrow {
    height: 28px;
    margin-left: auto;
    color: #6c757d;
}

.topup {
    border-color: #198754;
    background: linear-gradient(#3c996e, #198754);
    color: #fff;
    font-weight: 700;
    letter-spacing: 0.003em;
}

.topup .arrow {
    color: #fff;
}

.danger {
    margin-top: 16px;
    border-color: #dc3545;
    color: #dc3545;
}

/* Active washers */
.card-active {
    border-color: #137592;
    box-shadow: 0 16px 64px rgba(13, 12, 36, 0.8);
}

.card-head {
    display: flex;
    align-items: center;
    justify-content: space-between;
}

.card-head h5 {
    display: flex;
    align-items: center;
    gap: 16px;
}

.active-head {
    padding-bottom: 32px;
    border-bottom: 2px solid #2c3748;
    margin-bottom: 32px;
}

.active-head h5 {
    letter-spacing: -0.027em;
}

.pulse {
    width: 32px;
    height: 32px;
    border-radius: 50%;
    background: #196844;
}

.cycle-badge {
    height: 60px;
    padding: 0 33px;
    border: 2px solid #1a6148;
    border-radius: 12px;
    background: #193a3e;
    color: #198754;
    font-size: 24px;
    font-weight: 700;
    line-height: 57px;
    letter-spacing: 0.02em;
}

.washer {
    width: 790px;
    padding: 32px;
    border: 2px solid #31373d;
    border-radius: 16px;
    background: #1f232b;
    box-shadow: 0 4px 8px rgba(0, 0, 0, 0.08);
}

.washer-top {
    display: flex;
    align-items: center;
    justify-content: space-between;
}

.washer-top h6 {
    padding-top: 1px;
    font-size: 32px;
    line-height: 47px;
    letter-spacing: -0.004em;
}

.machine-line {
    height: 42px;
    color: #6c757d;
    font-size: 28px;
    line-height: 43px;
}

.tag {
    display: inline-block;
    height: 36px;
    padding: 0 14px;
    border-radius: 12px;
    background: #6c757d;
    color: #fff;
    font-size: 21px;
    font-weight: 700;
    line-height: 36px;
    letter-spacing: 0.02em;
}

.badge {
    display: inline-flex;
    align-items: center;
    height: 40px;
    padding: 0 16px;
    border-radius: 12px;
    font-size: 24px;
    font-weight: 700;
    line-height: 1;
    letter-spacing: 0.018em;
    vertical-align: middle;
}

.running {
    height: 44px;
    border: 2px solid #158199;
    background: #1b4d5b;
    color: #0dcaf0;
}

.running .icon {
    margin-right: 13px;
}

.spin {
    transform: rotate(110deg);
}

.program-line {
    margin: 16px 0;
    font-size: 28px;
    line-height: 42px;
}

.program-line strong {
    letter-spacing: 0.008em;
}

.cycle {
    padding: 16px;
    border-radius: 12px;
    background: #32383e;
}

.cycle-row {
    display: flex;
    justify-content: space-between;
    margin-bottom: 8px;
    color: #6c757d;
    font-size: 28px;
    line-height: 42px;
}

.cycle-row strong {
    color: #ffc107;
    letter-spacing: 0.012em;
}

.progress {
    height: 16px;
    border-radius: 8px;
    overflow: hidden;
}

.progress-bar {
    height: 16px;
    background-color: #0dcaf0;
    background-image: linear-gradient(45deg, rgba(255,255,255,.15) 25%, transparent 25%, transparent 50%, rgba(255,255,255,.15) 50%, rgba(255,255,255,.15) 75%, transparent 75%, transparent);
    background-size: 32px 32px;
}

.empty {
    padding: 80px 0 47px;
    color: #6c757d;
    letter-spacing: -0.019em;
    text-align: center;
}

.empty .icon {
    display: block;
    height: 64px;
    margin: 0 auto 17px;
    color: #434e5b;
}

/* Tables */
.wash-head {
    margin-bottom: 48px;
}

.topup-head {
    height: 48px;
    margin-bottom: 32px;
}

.controls {
    display: flex;
    justify-content: space-between;
    margin-bottom: 12px;
    color: #94a3b8;
    font-size: 28px;
}

.control {
    display: flex;
    align-items: center;
    gap: 8px;
}

.control input {
    width: 432px;
    height: 70px;
    margin-left: 7px;
    padding: 2px 22px 0;
    border: 2px solid #334155;
    border-radius: 16px;
    background: #0f172a;
    color: #fff;
    font: inherit;
    letter-spacing: inherit;
}

.control input::placeholder {
    color: #a5aab3;
    opacity: 1;
}

.length {
    position: relative;
    width: 84px;
    height: 70px;
    padding-left: 23px;
    border: 2px solid #27344a;
    border-radius: 16px;
    background: #0f172a;
    color: #fff;
    line-height: 67px;
}

.length svg {
    position: absolute;
    left: 34px;
    top: 23px;
    width: 22px;
    height: 22px;
    fill: none;
    stroke: #dee2e6;
    stroke-width: 2;
    stroke-linecap: round;
    stroke-linejoin: round;
}

table {
    width: 1612px;
    table-layout: fixed;
    border-collapse: collapse;
    background: #212529;
}

.w1 { width: 269px; }
.w2 { width: 337px; }
.w3 { width: 199px; }
.w4 { width: 360px; }
.w5 { width: 207px; }
.w6 { width: 240px; }

.t1 { width: 318px; }
.t2 { width: 376px; }
.t3 { width: 305px; }
.t4 { width: 350px; }
.t5 { width: 263px; }

th {
    position: relative;
    height: 81px;
    padding: 0 16px;
    border-bottom: 2px solid #32373d;
    color: #fff;
    font-weight: 700;
    letter-spacing: -0.004em;
    text-align: left;
    white-space: nowrap;
}

th::before,
th::after {
    content: "";
    position: absolute;
    right: 22px;
    width: 16px;
    height: 17px;
    background: #43474b;
}

th::before {
    top: 23px;
    clip-path: polygon(50% 0, 100% 100%, 0 100%);
}

th::after {
    top: 41px;
    clip-path: polygon(0 0, 100% 0, 50% 100%);
}

th.desc::after {
    background: #b4b5b6;
}

tbody tr { height: 83px; }
tbody tr.two { height: 118px; }
tbody tr.tall { height: 130px; }
.topup-table tbody tr { height: 83.3px; }

td {
    padding: 0 16px;
    border-bottom: 2px solid #292d32;
    vertical-align: middle;
}

.date {
    padding-right: 0;
    color: #6c757d;
    font-size: 28px;
    letter-spacing: 0.002em;
}

.loc {
    padding-right: 0;
    color: #fff;
    font-weight: 700;
    letter-spacing: 0.008em;
}

.prog {
    font-size: 28px;
    letter-spacing: -0.008em;
}

.amount {
    color: #198754;
}

td small {
    color: #6c757d;
    font-size: 28px;
}

.grey {
    background: #6c757d;
    color: #fff;
}

.ok {
    height: 44px;
    border: 2px solid #1d6041;
    background: #203a34;
    color: #198754;
    letter-spacing: 0.01em;
}

.ok .icon {
    margin-right: 14px;
}

code {
    color: #0dcaf0;
    font-family: "DejaVu Sans Mono", monospace;
    font-size: 28px;
    letter-spacing: -0.002em;
}

.provider {
    height: 45px;
    border: 2px solid #6c757d;
    color: #fff;
}

.provider .icon {
    margin-right: 14px;
}

.stripe {
    width: 30px;
    margin-right: 14px;
    color: #0d6efd;
    font-size: 11px;
    letter-spacing: -0.03em;
}

.total-badge {
    height: 45px;
    padding: 0 31px;
    border: 2px solid #a68121;
    border-radius: 23px;
    background: #52492d;
    color: #ffc107;
    font-size: 24px;
    font-weight: 700;
    line-height: 41px;
    letter-spacing: 0.021em;
}

.table-foot {
    display: flex;
    align-items: center;
    justify-content: space-between;
    padding: 16px 0 4px;
}

.info {
    margin-top: 8px;
    color: #94a3b8;
    font-size: 28px;
    letter-spacing: -0.007em;
}

.pagination {
    display: flex;
}

.page {
    display: flex;
    align-items: center;
    justify-content: center;
    width: 69px;
    height: 76px;
    margin-left: -2px;
    border: 2px solid #334155;
    background: #1e293b;
    color: #38bdf8;
}

.page .icon {
    height: 30px;
}

.page:first-child {
    border-radius: 12px 0 0 12px;
}

.page:last-child {
    width: 71px;
    border-radius: 0 12px 12px 0;
}

.page.current {
    z-index: 1;
    border-color: #0284c7;
    background: #0284c7;
    color: #fff;
}

.page.off {
    border-color: #192437;
    background: #0f172a;
    color: #64748b;
}

.footer {
    width: 2640px;
    margin: 96px auto 0;
    padding: 50px 0 46px;
    border-top: 2px solid #222b3d;
    color: #a3a8b0;
    font-size: 28px;
    line-height: 42px;
    text-align: center;
}
```
